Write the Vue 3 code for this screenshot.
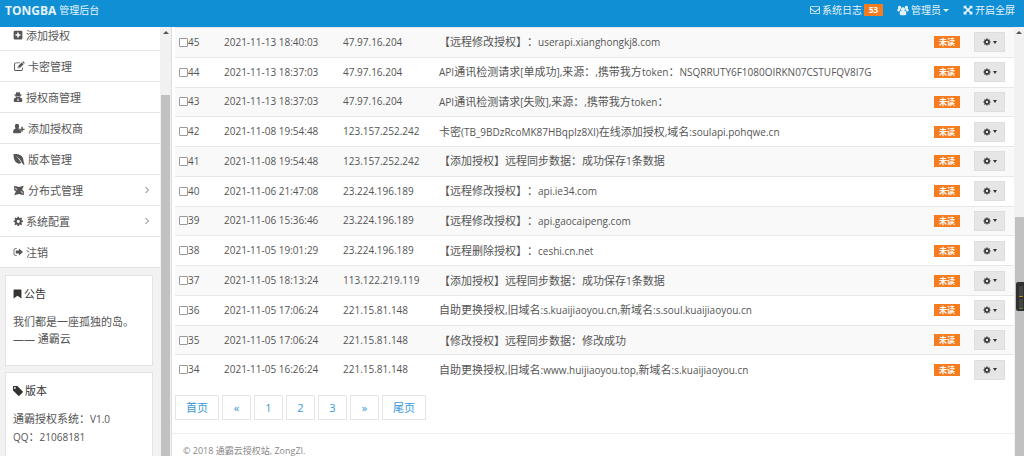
<script setup>
import { ref } from 'vue'

const icons = {
  plus: 'M3 1h10a2 2 0 0 1 2 2v10a2 2 0 0 1-2 2H3a2 2 0 0 1-2-2V3a2 2 0 0 1 2-2zm3.800 3v2.800H4v2.400h2.800V12h2.400V9.200H12V6.800H9.200V4z',
  edit: 'M3 2h7l-1.200 1.200H3.200a1 1 0 0 0-1 1v8a1 1 0 0 0 1 1h8a1 1 0 0 0 1-1V10l1.200-1.200V12.200a2.200 2.200 0 0 1-2.200 2.200H3a2.200 2.200 0 0 1-2.200-2.200V4.200A2.200 2.200 0 0 1 3 2zM6 8l6-6 2.700 2.700-6 6H6zm1 .4v1.300h1.300l.6-.6-1.300-1.300zM12.700 1.300l.7-.7q.5-.4 1 0l1.600 1.600q.5.500 0 1l-.7.800z',
  secret: 'M5.500 0q1.200 0 2.500.6Q9.300 0 10.500 0l1.100 3.500 2.400.8v1l-2.100.7q.2 1.700-.9 2.900Q15 9.500 15 13q0 3-2.200 3H3.200Q1 16 1 13q0-3.500 4-4.100Q3.900 7.700 4.100 6L2 5.300v-1l2.400-.8zM5.300 6.300q.2 1.300 1.200 1.300T7.700 6.800h.6q.2.800 1.200.8t1.200-1.300zM6.500 10l.9 2-.6 2.500h2.400L8.600 12l.9-2L8 11z',
  userplus: 'M6 1q3.200 0 3.200 3.500 0 1.700-1.200 3L11 9v1.500h1V14q-.5 1-1.500 1h-9Q0 15 0 13q0-4 4-5.500-1.200-1.300-1.200-3Q2.800 1 6 1zM12.500 5.500h2.200v2.700h2.600v2.200h-2.600V13h-2.200v-2.600H10V8.200h2.500z',
  leaf: 'M0 0q5-.5 9.500 1.500Q14.500 4 14.500 10l1.500 5-1 1-3-3.500Q9 6 3.500 3q5 4.500 7.700 9.800-3.500 2.700-7.200-.3Q0 9 0 0z',
  modx: 'M1 1l7 2 7-2-2.500 6 2.500 2v6l-7-2-7 2 2.500-6L1 7.500zm1.800 2.200.2 2.800 3 1.500zm10.400 9.800-.2-2.800-3-1.700z',
  cog: 'm6.700 1 .3 2-1.300.6L4 2.400 2.300 4.100 3.500 5.800 3 7l-2 .3v2.300l2 .4.5 1.200L2.300 13 4 14.700l1.700-1.200L7 14l.3 2h2.300l.4-2 1.200-.5 1.800 1.200 1.700-1.700-1.200-1.800.5-1.200 2-.4V7.300L14 7l-.5-1.200 1.200-1.700L13 2.400l-1.800 1.200L10 3l-.4-2zM8.500 6a2.500 2.500 0 1 1 0 5 2.500 2.500 0 0 1 0-5z',
  signout: 'M6 2H4Q1 2 1 5v6q0 3 3 3h2v-1.300H4Q2.300 12.700 2.300 11V5Q2.300 3.300 4 3.300h2zM9.500 2.500 16 8l-6.500 5.500V10.500H4.500v-5h5z',
  bookmark: 'M2 0h12q1 0 1 1v15l-7-5-7 5V1q0-1 1-1z',
  tag: 'M0 0h7l8.600 8.600q.8.800 0 1.500L10.100 15.600q-.8.800-1.500 0L0 7zm3 1.500a1.500 1.500 0 1 0 0 3 1.500 1.500 0 0 0 0-3z',
  envelope: 'M2 2h12q2 0 2 2v8.500q0 2-2 2H2q-2 0-2-2V4q0-2 2-2zm0 1.300q-.7 0-.7.800 0 1 1 1.800L8 10l5.700-4.100q1-.8 1-1.800 0-.8-.7-.8zM1.300 7v5.500q0 .7.700.7h12q.7 0 .7-.7V7L9 11.200q-1 .6-2 0z',
  users: 'M8 3a3 3 0 0 1 2.200 5Q13 8.200 13 12v1q0 2-2 2H5q-2 0-2-2v-1q0-3.800 2.800-4A3 3 0 0 1 8 3zM3 1a2.300 2.300 0 0 1 2 3.300Q4 5.500 4.300 7.500 2.500 8 2.300 9.500H1Q-.5 9.500-.5 8q0-2.700 1.700-3A2.300 2.300 0 0 1 3 1zm10 0a2.300 2.300 0 0 1 1.800 4q1.700.3 1.700 3 0 1.500-1.500 1.500h-1.300q-.2-1.500-2-2Q12 5.500 11 4.300A2.300 2.300 0 0 1 13 1z',
  expand: 'M1 1h5.500L4.800 2.800 8 6l3.200-3.200L9.500 1H15v5.500l-1.800-1.700L10 8l3.200 3.200L15 9.500V15H9.500l1.700-1.800L8 10l-3.200 3.200L6.500 15H1V9.500l1.800 1.700L6 8 2.800 4.800 1 6.500z',
}

const menu = [
  { icon: 'plus', label: '添加授权' },
  { icon: 'edit', label: '卡密管理' },
  { icon: 'secret', label: '授权商管理' },
  { icon: 'userplus', label: '添加授权商' },
  { icon: 'leaf', label: '版本管理' },
  { icon: 'modx', label: '分布式管理', more: true },
  { icon: 'cog', label: '系统配置', more: true },
  { icon: 'signout', label: '注销' },
]
const wideIcons = ['edit', 'userplus', 'leaf', 'modx']

// Latin runs are set one size below the Chinese text around them.
const runs = (text) =>
  text.match(/[\x20-\x7e]+|[^\x20-\x7e]+/g).map((t) => ({ t, latin: /^[\x20-\x7e]/.test(t) }))

const logs = ref([
  [45, '2021-11-13 18:40:03', '47.97.16.204', '【远程修改授权】：userapi.xianghongkj8.com'],
  [44, '2021-11-13 18:37:03', '47.97.16.204', 'API通讯检测请求[单成功],来源：,携带我方token：NSQRRUTY6F1080OIRKN07CSTUFQV8I7G'],
  [43, '2021-11-13 18:37:03', '47.97.16.204', 'API通讯检测请求[失败],来源：,携带我方token：'],
  [42, '2021-11-08 19:54:48', '123.157.252.242', '卡密(TB_9BDzRcoMK87HBqpIz8XI)在线添加授权,域名:soulapi.pohqwe.cn'],
  [41, '2021-11-08 19:54:48', '123.157.252.242', '【添加授权】远程同步数据：成功保存1条数据'],
  [40, '2021-11-06 21:47:08', '23.224.196.189', '【远程修改授权】：api.ie34.com'],
  [39, '2021-11-06 15:36:46', '23.224.196.189', '【远程修改授权】：api.gaocaipeng.com'],
  [38, '2021-11-05 19:01:29', '23.224.196.189', '【远程删除授权】：ceshi.cn.net'],
  [37, '2021-11-05 18:13:24', '113.122.219.119', '【添加授权】远程同步数据：成功保存1条数据'],
  [36, '2021-11-05 17:06:24', '221.15.81.148', '自助更换授权,旧域名:s.kuaijiaoyou.cn,新域名:s.soul.kuaijiaoyou.cn'],
  [35, '2021-11-05 17:06:24', '221.15.81.148', '【修改授权】远程同步数据：修改成功'],
  [34, '2021-11-05 16:26:24', '221.15.81.148', '自助更换授权,旧域名:www.huijiaoyou.top,新域名:s.kuaijiaoyou.cn'],
].map(([id, time, ip, text]) => ({ id, time, ip, text: runs(text), checked: false })))

const pages = ['首页', '«', '1', '2', '3', '»', '尾页']
</script>

<template>
  <div class="app">
    <header class="topbar">
      <a href="#" class="brand"><b>TONGBA</b><span>管理后台</span></a>
      <nav class="tools">
        <a href="#">
          <svg class="icon" viewBox="0 0 16 16"><path :d="icons.envelope" fill-rule="evenodd" /></svg>
          <span>系统日志</span><b class="badge count">53</b>
        </a>
        <a href="#">
          <svg class="icon users" viewBox="-1 0 18 16"><path :d="icons.users" /></svg>
          <span>管理员</span><i class="caret"></i>
        </a>
        <a href="#">
          <svg class="icon" viewBox="0 0 16 16"><path :d="icons.expand" /></svg>
          <span>开启全屏</span>
        </a>
      </nav>
    </header>

    <div class="body">
      <aside class="sidebar">
        <div class="side-content">
          <ul class="menu">
            <li v-for="m in menu" :key="m.label">
              <a href="#">
                <svg class="icon" :class="{ wide: wideIcons.includes(m.icon) }" :viewBox="m.icon === 'userplus' ? '0 0 18 16' : '0 0 16 16'"><path :d="icons[m.icon]" fill-rule="evenodd" /></svg>
                <span>{{ m.label }}</span>
                <svg v-if="m.more" class="more" viewBox="0 0 6 8"><path d="M1.500 1 4.500 4 1.500 7" /></svg>
              </a>
            </li>
          </ul>
          <section class="card">
            <h2><svg class="icon small" viewBox="0 0 16 16"><path :d="icons.bookmark" /></svg>公告</h2>
            <p>我们都是一座孤独的岛。<br>—— 通霸云</p>
          </section>
          <section class="card">
            <h2><svg class="icon" viewBox="0 0 16 16"><path :d="icons.tag" fill-rule="evenodd" /></svg>版本</h2>
            <p>通霸授权系统：<span class="latin">V1.0</span><br><span class="latin">QQ</span>：<span class="latin">21068181</span></p>
          </section>
        </div>
        <div class="track side-track"><i class="up"></i><div class="thumb"></div></div>
      </aside>

      <main class="main">
        <div class="content">
          <table class="logs">
            <colgroup><col class="c-id"><col class="c-time"><col class="c-ip"><col><col class="c-state"><col class="c-act"></colgroup>
            <tbody>
              <tr v-for="l in logs" :key="l.id">
                <td class="latin"><label class="pick"><input v-model="l.checked" type="checkbox">{{ l.id }}</label></td>
                <td class="latin">{{ l.time }}</td>
                <td class="latin">{{ l.ip }}</td>
                <td><span v-for="(r, i) in l.text" :key="i" :class="{ latin: r.latin }">{{ r.t }}</span></td>
                <td><b class="badge">未读</b></td>
                <td>
                  <button class="act" type="button" aria-label="操作">
                    <svg viewBox="0 0 17 17"><path :d="icons.cog" fill-rule="evenodd" /></svg><i class="caret"></i>
                  </button>
                </td>
              </tr>
            </tbody>
          </table>
          <nav class="pager">
            <a v-for="p in pages" :key="p" href="#" :class="{ edge: p.length > 1 }">{{ p }}</a>
          </nav>
          <footer>© 2018 通霸云授权站, ZongZI.</footer>
        </div>
        <div class="track main-track"><i class="up"></i><div class="thumb"></div></div>
        <div class="meter"><i class="amber"></i><i class="green"></i></div>
      </main>
    </div>
  </div>
</template>

<style>
body { margin: 0; overflow: hidden; }
</style>

<style scoped>
* { box-sizing: border-box; }
.app {
  display: flex;
  flex-direction: column;
  height: 100vh;
  overflow: hidden;
  background: #fff;
  color: #555;
  font: 11px/17px "Open Sans", "Noto Sans CJK SC", sans-serif;
  text-spacing-trim: space-all;
}
.latin { font-size: 10px; }
a { color: inherit; text-decoration: none; }
.icon { width: 10px; height: 10px; fill: currentColor; flex: none; }
.icon.wide, .icon.users { width: 12px; height: 11px; }
.icon.small { width: 9px; }

.topbar {
  display: flex;
  justify-content: space-between;
  flex: none;
  height: 27px;
  padding: 0 9px 7px 5px;
  background: #108fd4;
  color: #e4f3fb;
  font-size: 10px;
}
.brand { display: flex; align-items: center; gap: 3px; }
.brand b { font-size: 12px; }
.tools { display: flex; gap: 14px; }
.tools a { display: flex; align-items: center; gap: 2px; }
.caret {
  border: 3px solid transparent;
  border-top-color: currentColor;
  border-bottom: 0;
}
.badge {
  display: block;
  width: 26px;
  height: 12px;
  background: #f57c1f;
  color: #fff;
  font-size: 8px;
  line-height: 12px;
  text-align: center;
}
.badge.count { width: 19px; }

.body { display: flex; flex: 1; min-height: 0; }
.sidebar {
  display: flex;
  flex: none;
  width: 172px;
  background: #f2f2f2;
  border-right: 1px solid #ddd;
}
.side-content { flex: 1; overflow: hidden; }
.menu { margin: -7px 0 7px; padding: 0; list-style: none; background: #fff; }
.menu a {
  display: flex;
  align-items: center;
  gap: 3px;
  height: 31px;
  padding: 0 10px 0 13px;
  border-bottom: 1px solid #e5e5e5;
}
.more { width: 6px; height: 8px; margin-left: auto; fill: none; stroke: #777; }
.card {
  height: 91px;
  margin: 0 7px 6px 5px;
  padding: 9px 7px;
  background: #fff;
  border: 1px solid #e3e3e3;
}
.card h2 {
  display: flex;
  align-items: center;
  gap: 2px;
  margin: 0 0 11px;
  color: #333;
  font-size: 11px;
  font-weight: 400;
}
.card p { margin: 0; }

.track { display: flex; flex-direction: column; align-items: center; flex: none; background: #f1f1f1; }
.up { margin-top: 4px; border: 3px solid transparent; border-top: 0; border-bottom-color: #555; }
.thumb { flex: 1; background: #c1c1c1; }
.side-track { width: 11px; }
.side-track .thumb { width: 9px; margin-top: 61px; }
.main-track { width: 10px; }
.main-track .thumb { width: 9px; margin-top: 183px; }

.main { position: relative; display: flex; flex: 1; min-width: 0; }
.content { flex: 1; min-width: 0; overflow: hidden; }
.logs {
  width: calc(100% - 3px);
  height: 357px;
  margin: 0 0 11px 3px;
  table-layout: fixed;
  border-collapse: collapse;
}
.c-id { width: 45px; }
.c-time { width: 119px; }
.c-ip { width: 96px; }
.c-state { width: 40px; }
.c-act { width: 44px; }
.logs td { padding: 0 4px; border-top: 1px solid #e7e7e7; white-space: nowrap; vertical-align: middle; }
.logs tr:nth-child(odd) { background: #f9f9f9; }
.pick { display: flex; align-items: center; }
.pick input {
  appearance: none;
  width: 9px;
  height: 9px;
  margin: 0;
  background: #fff;
  border: 1px solid #999;
  border-radius: 1px;
}
.pick input:checked { background: #108fd4; }
.act {
  display: flex;
  align-items: center;
  justify-content: center;
  gap: 2px;
  width: 31px;
  height: 20px;
  padding: 0;
  background: #e6e6e6;
  border: 1px solid #dedede;
  color: #333;
}
.act svg { width: 8px; height: 8px; fill: currentColor; }
.act .caret { border-width: 3px 2px 0; }

.pager { display: flex; gap: 3px; margin-left: 3px; }
.pager a {
  width: 29px;
  height: 25px;
  border: 1px solid #e5e5e5;
  color: #3498db;
  line-height: 23px;
  text-align: center;
}
.pager .edge { width: 44px; }
footer {
  margin-top: 13px;
  padding: 12px 11px 0;
  border-top: 1px solid #eee;
  color: #888;
  font-size: 9px;
  line-height: 10px;
}
.meter {
  position: absolute;
  top: 255px;
  right: 0;
  display: flex;
  flex-direction: column;
  gap: 2px;
  width: 8px;
  height: 29px;
  padding: 4px 1px 2px 3px;
  background: #303030;
  border-radius: 2px 0 0 2px;
}
.meter i { flex: 1; background: #444; border-bottom: 1px solid #c08a20; }
.meter .green { border-color: #5a8a28; }
</style>
